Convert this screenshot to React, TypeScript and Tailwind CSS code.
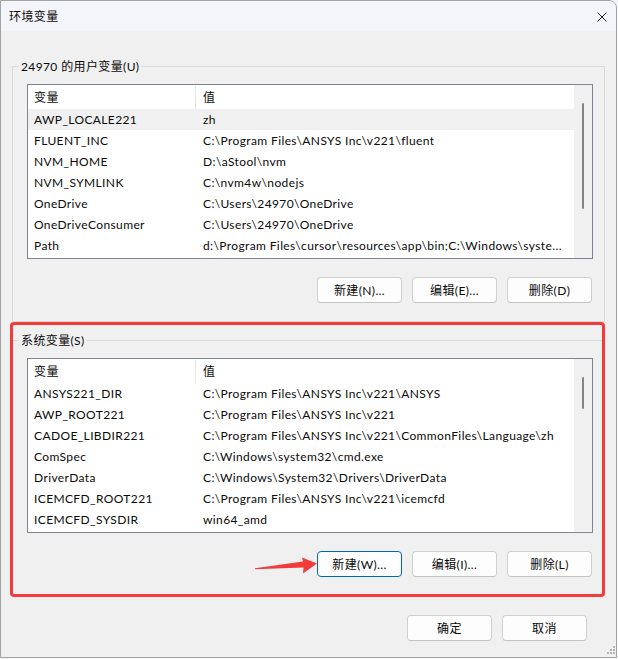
import React from "react";

type Row = [string, string];

const userRows: Row[] = [
  ["AWP_LOCALE221", "zh"],
  ["FLUENT_INC", String.raw`C:\Program Files\ANSYS Inc\v221\fluent`],
  ["NVM_HOME", String.raw`D:\aStool\nvm`],
  ["NVM_SYMLINK", String.raw`C:\nvm4w\nodejs`],
  ["OneDrive", String.raw`C:\Users\24970\OneDrive`],
  ["OneDriveConsumer", String.raw`C:\Users\24970\OneDrive`],
  ["Path", String.raw`d:\Program Files\cursor\resources\app\bin;C:\Windows\syste...`],
];

const sysRows: Row[] = [
  ["ANSYS221_DIR", String.raw`C:\Program Files\ANSYS Inc\v221\ANSYS`],
  ["AWP_ROOT221", String.raw`C:\Program Files\ANSYS Inc\v221`],
  ["CADOE_LIBDIR221", String.raw`C:\Program Files\ANSYS Inc\v221\CommonFiles\Language\zh`],
  ["ComSpec", String.raw`C:\Windows\system32\cmd.exe`],
  ["DriverData", String.raw`C:\Windows\System32\Drivers\DriverData`],
  ["ICEMCFD_ROOT221", String.raw`C:\Program Files\ANSYS Inc\v221\icemcfd`],
  ["ICEMCFD_SYSDIR", "win64_amd"],
];

function VarList({ rows, hoverFirst, thumbH }: { rows: Row[]; hoverFirst?: boolean; thumbH: number }) {
  return (
    <div className="w-[566px] h-[175px] border border-[#7f858f] bg-white flex">
      <div className="w-[546px] flex flex-col overflow-hidden">
        <div className="h-[24px] flex items-center shrink-0 pt-[1px]">
          <div className="w-[168px] h-full flex items-center pl-[6px] border-r border-[#e5e5e5]">变量</div>
          <div className="pl-[7px]">值</div>
        </div>
        {rows.map((r, i) => (
          <div
            key={r[0]}
            className={
              "h-[21px] flex items-center shrink-0 whitespace-nowrap pt-[1px] " +
              (hoverFirst && i === 0 ? "bg-[#f0f0f0]" : "")
            }
          >
            <div className="w-[168px] pl-[6px] shrink-0">{r[0]}</div>
            <div className="pl-[7px] overflow-hidden">{r[1]}</div>
          </div>
        ))}
      </div>
      <div className="w-[18px] h-full bg-[#f0f0f0] flex justify-center pt-[18px]">
        <div className="w-[2px] bg-[#858585] rounded-full" style={{ height: thumbH }} />
      </div>
    </div>
  );
}

function Btn({ label, focused }: { label: string; focused?: boolean }) {
  return (
    <div
      className={
        "w-[85px] h-[26px] rounded-[4px] bg-[#fdfdfd] flex items-center justify-center pt-[1px] " +
        (focused ? "border-[1.5px] border-[#0067c0]" : "border border-[#d0d0d0] border-b-[#c4c4c4]")
      }
    >
      {label}
    </div>
  );
}

function Group({
  title,
  rows,
  hoverFirst,
  thumbH,
  buttons,
  focusFirst,
}: {
  title: string;
  rows: Row[];
  hoverFirst?: boolean;
  thumbH: number;
  buttons: string[];
  focusFirst?: boolean;
}) {
  return (
    <div className="relative ml-[11px] w-[593px] h-[256px] border border-[#d9d9d9] pl-[14px] pt-[17px] flex flex-col">
      <div className="absolute left-[6px] top-[-9px] px-[2px] bg-[#f0f0f0] leading-[18px]">{title}</div>
      <VarList rows={rows} hoverFirst={hoverFirst} thumbH={thumbH} />
      <div className="w-[565px] mt-[18px] flex justify-end gap-[10px]">
        {buttons.map((b, i) => (
          <Btn key={b} label={b} focused={focusFirst && i === 0} />
        ))}
      </div>
    </div>
  );
}

export default function App() {
  return (
    <div
      className="relative w-[618px] h-[659px] bg-[#f4f4f4] overflow-hidden text-[12px] text-[#0a0a0a] tracking-[0.38px]"
      style={{ fontFamily: "Lato, 'Noto Sans CJK SC', sans-serif" }}
    >
      <div className="w-[617px] h-[658px] border border-[#a3a3a3] rounded-tr-[8px] bg-[#f0f0f0] flex flex-col overflow-hidden">
        <div className="h-[30px] bg-[#f3f5fa] flex items-center justify-between pl-[8px] pr-[9px] shrink-0 pt-[1px]">
          <span className="text-[12px]">环境变量</span>
          <svg width="10" height="10" viewBox="0 0 10 10">
            <path d="M0.5 0.5 L9.5 9.5 M9.5 0.5 L0.5 9.5" stroke="#222" strokeWidth="1" fill="none" />
          </svg>
        </div>
        <div className="mt-[35px]">
          <Group
            title="24970 的用户变量(U)"
            rows={userRows}
            hoverFirst
            thumbH={106}
            buttons={["新建(N)...", "编辑(E)...", "删除(D)"]}
          />
        </div>
        <div className="mt-[18px]">
          <Group
            title="系统变量(S)"
            rows={sysRows}
            thumbH={32}
            buttons={["新建(W)...", "编辑(I)...", "删除(L)"]}
            focusFirst
          />
        </div>
        <div className="mt-[19px] flex justify-end gap-[10px] pr-[29px]">
          <Btn label="确定" />
          <Btn label="取消" />
        </div>
      </div>

      {/* red annotation box */}
      <div className="absolute left-[10px] top-[322px] w-[595px] h-[275px] border-[3px] border-[#f23b3b] rounded-[4px]" />

      {/* red annotation arrow */}
      <svg className="absolute left-[250px] top-[553px]" width="70" height="25" viewBox="250 553 70 25">
        <polygon
          points="255,568.2 303,561.5 302,557.5 317,563.5 303,573.5 303.5,567.5 255,569.2"
          fill="#f23b3b"
        />
      </svg>

      {/* resize grip */}
      <svg className="absolute left-[604px] top-[645px]" width="12" height="12" viewBox="0 0 12 12">
        {[
          [9, 1],
          [6, 4],
          [9, 4],
          [3, 7],
          [6, 7],
          [9, 7],
        ].map(([x, y], i) => (
          <rect key={i} x={x} y={y} width="2" height="2" fill="#b5b5b5" />
        ))}
      </svg>
    </div>
  );
}
